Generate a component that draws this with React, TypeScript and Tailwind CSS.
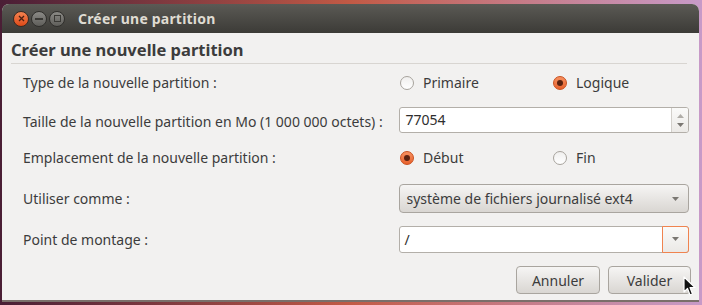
import React from "react";

const font = { fontFamily: '"Noto Sans", "Open Sans", "DejaVu Sans", sans-serif' };

function Radio({ checked }: { checked: boolean }) {
  return checked ? (
    <span className="w-[14px] h-[14px] rounded-full border border-[#c9501f] bg-gradient-to-b from-[#f6905f] to-[#e8612b] flex items-center justify-center shrink-0">
      <span className="w-[6px] h-[6px] rounded-full bg-[#5a2210]" />
    </span>
  ) : (
    <span className="w-[14px] h-[14px] rounded-full border border-[#a7a39d] bg-gradient-to-b from-[#f0efee] to-white shrink-0" />
  );
}

function Tri({ down = true, className = "" }: { down?: boolean; className?: string }) {
  return (
    <svg width="7" height="4" viewBox="0 0 7 4" className={className}>
      {down ? <path d="M0 0 L7 0 L3.5 4 Z" fill="#7a7772" /> : <path d="M0 4 L7 4 L3.5 0 Z" fill="#b0ada8" />}
    </svg>
  );
}

export default function App() {
  return (
    <div
      className="w-[702px] h-[305px] bg-gradient-to-r from-[#4a1e35] via-[#c25a45] to-[#c79ac8] pt-[4px] pl-[2px] pr-[3px] pb-[3px]"
      style={font}
    >
      <div className="w-[697px] h-[298px] flex flex-col rounded-t-[7px] overflow-hidden bg-[#f2f1f0] border-b-2 border-[#7a6f6a]">
        {/* Title bar */}
        <div className="h-[29px] shrink-0 bg-gradient-to-b from-[#5b5a55] to-[#3c3b37] flex items-center pl-[11px]">
          <div className="flex items-center gap-[2px]">
            <span className="w-[16px] h-[16px] rounded-full bg-gradient-to-b from-[#f38350] to-[#dd4814] border border-[#3b2a22] flex items-center justify-center">
              <svg width="7" height="7" viewBox="0 0 7 7">
                <path d="M1 1 L6 6 M6 1 L1 6" stroke="#4a2012" strokeWidth="1.3" />
              </svg>
            </span>
            <span className="w-[16px] h-[16px] rounded-full bg-gradient-to-b from-[#8b8a86] to-[#5f5e5a] border border-[#302f2c] flex items-center justify-center">
              <span className="w-[8px] h-[2px] bg-[#3a3935]" />
            </span>
            <span className="w-[16px] h-[16px] rounded-full bg-gradient-to-b from-[#8b8a86] to-[#5f5e5a] border border-[#302f2c] flex items-center justify-center">
              <span className="w-[7px] h-[7px] border-[1.5px] border-[#3a3935]" />
            </span>
          </div>
          <span className="ml-[13px] text-[14px] font-bold text-[#dfdbd2] tracking-[0.2px]">Créer une partition</span>
        </div>

        {/* Body */}
        <div className="flex-1 flex flex-col px-[9px] text-[#3c3c3c]">
          <div className="h-[31px] pt-[4px] flex items-center border-b border-[#d8d5d1] mr-[3px]">
            <span className="text-[16.5px] font-bold text-[#3c3c3c]">Créer une nouvelle partition</span>
          </div>

          <div className="pl-[12px] pr-[1px] text-[14px]">
            <div className="h-[37px] flex items-center">
              <span className="w-[377px]">Type de la nouvelle partition :</span>
              <div className="flex items-center gap-[9px] w-[153px]">
                <Radio checked={false} />
                <span>Primaire</span>
              </div>
              <div className="flex items-center gap-[9px]">
                <Radio checked />
                <span>Logique</span>
              </div>
            </div>

            <div className="h-[38px] flex items-center">
              <span className="w-[377px] pt-[3px]">Taille de la nouvelle partition en Mo (1 000 000 octets) :</span>
              <div className="w-[290px] h-[26px] flex rounded-[3px] border border-[#b3afa9] bg-white overflow-hidden">
                <span className="flex-1 pl-[5px] leading-[24px] text-[#2e2e2e]">77054</span>
                <div className="w-[17px] border-l border-[#d3d0cb] bg-gradient-to-b from-[#fafaf9] to-[#eceae7] flex flex-col items-center justify-center gap-[5px]">
                  <Tri down={false} />
                  <Tri />
                </div>
              </div>
            </div>

            <div className="h-[37px] flex items-center">
              <span className="w-[377px]">Emplacement de la nouvelle partition :</span>
              <div className="flex items-center gap-[9px] w-[153px]">
                <Radio checked />
                <span>Début</span>
              </div>
              <div className="flex items-center gap-[9px]">
                <Radio checked={false} />
                <span>Fin</span>
              </div>
            </div>

            <div className="h-[45px] flex items-center">
              <span className="w-[377px]">Utiliser comme :</span>
              <div className="w-[290px] h-[29px] flex items-center justify-between rounded-[4px] border border-[#a9a59f] bg-gradient-to-b from-[#f6f5f4] to-[#d9d6d2] pl-[6px] pr-[9px]">
                <span className="text-[#3c3c3c]">système de fichiers journalisé ext4</span>
                <Tri />
              </div>
            </div>

            <div className="h-[36px] flex items-center">
              <span className="w-[377px]">Point de montage :</span>
              <div className="w-[290px] h-[27px] flex rounded-[3px] border border-[#b3afa9] bg-white">
                <span className="flex-1 pl-[4px] leading-[25px] text-[#2e2e2e]">/</span>
                <div className="w-[27px] -my-px -mr-px rounded-r-[3px] border border-[#f0834f] bg-gradient-to-b from-[#fafaf9] to-[#ebe9e6] flex items-center justify-center">
                  <Tri />
                </div>
              </div>
            </div>

            <div className="flex justify-end gap-[8px] pt-[9px] -mr-[2px]">
              <button className="relative w-[84px] h-[28px] rounded-[4px] border border-[#a9a59f] bg-gradient-to-b from-[#f6f5f4] to-[#d9d6d2] text-[14px] text-[#3c3c3c]">
                Annuler
              </button>
              <button className="relative w-[83px] h-[28px] rounded-[4px] border border-[#a9a59f] bg-gradient-to-b from-[#f6f5f4] to-[#d9d6d2] text-[14px] text-[#3c3c3c]">
                Valider
                <svg width="14" height="22" viewBox="0 0 14 22" className="absolute left-[74px] top-[9px]">
                  <path d="M1 1 L1 16 L4.5 12.5 L7 19 L9.5 18 L7 11.5 L12 11.5 Z" fill="#111" stroke="#fff" strokeWidth="1.2" strokeLinejoin="round" />
                </svg>
              </button>
            </div>
          </div>
        </div>
      </div>
    </div>
  );
}
